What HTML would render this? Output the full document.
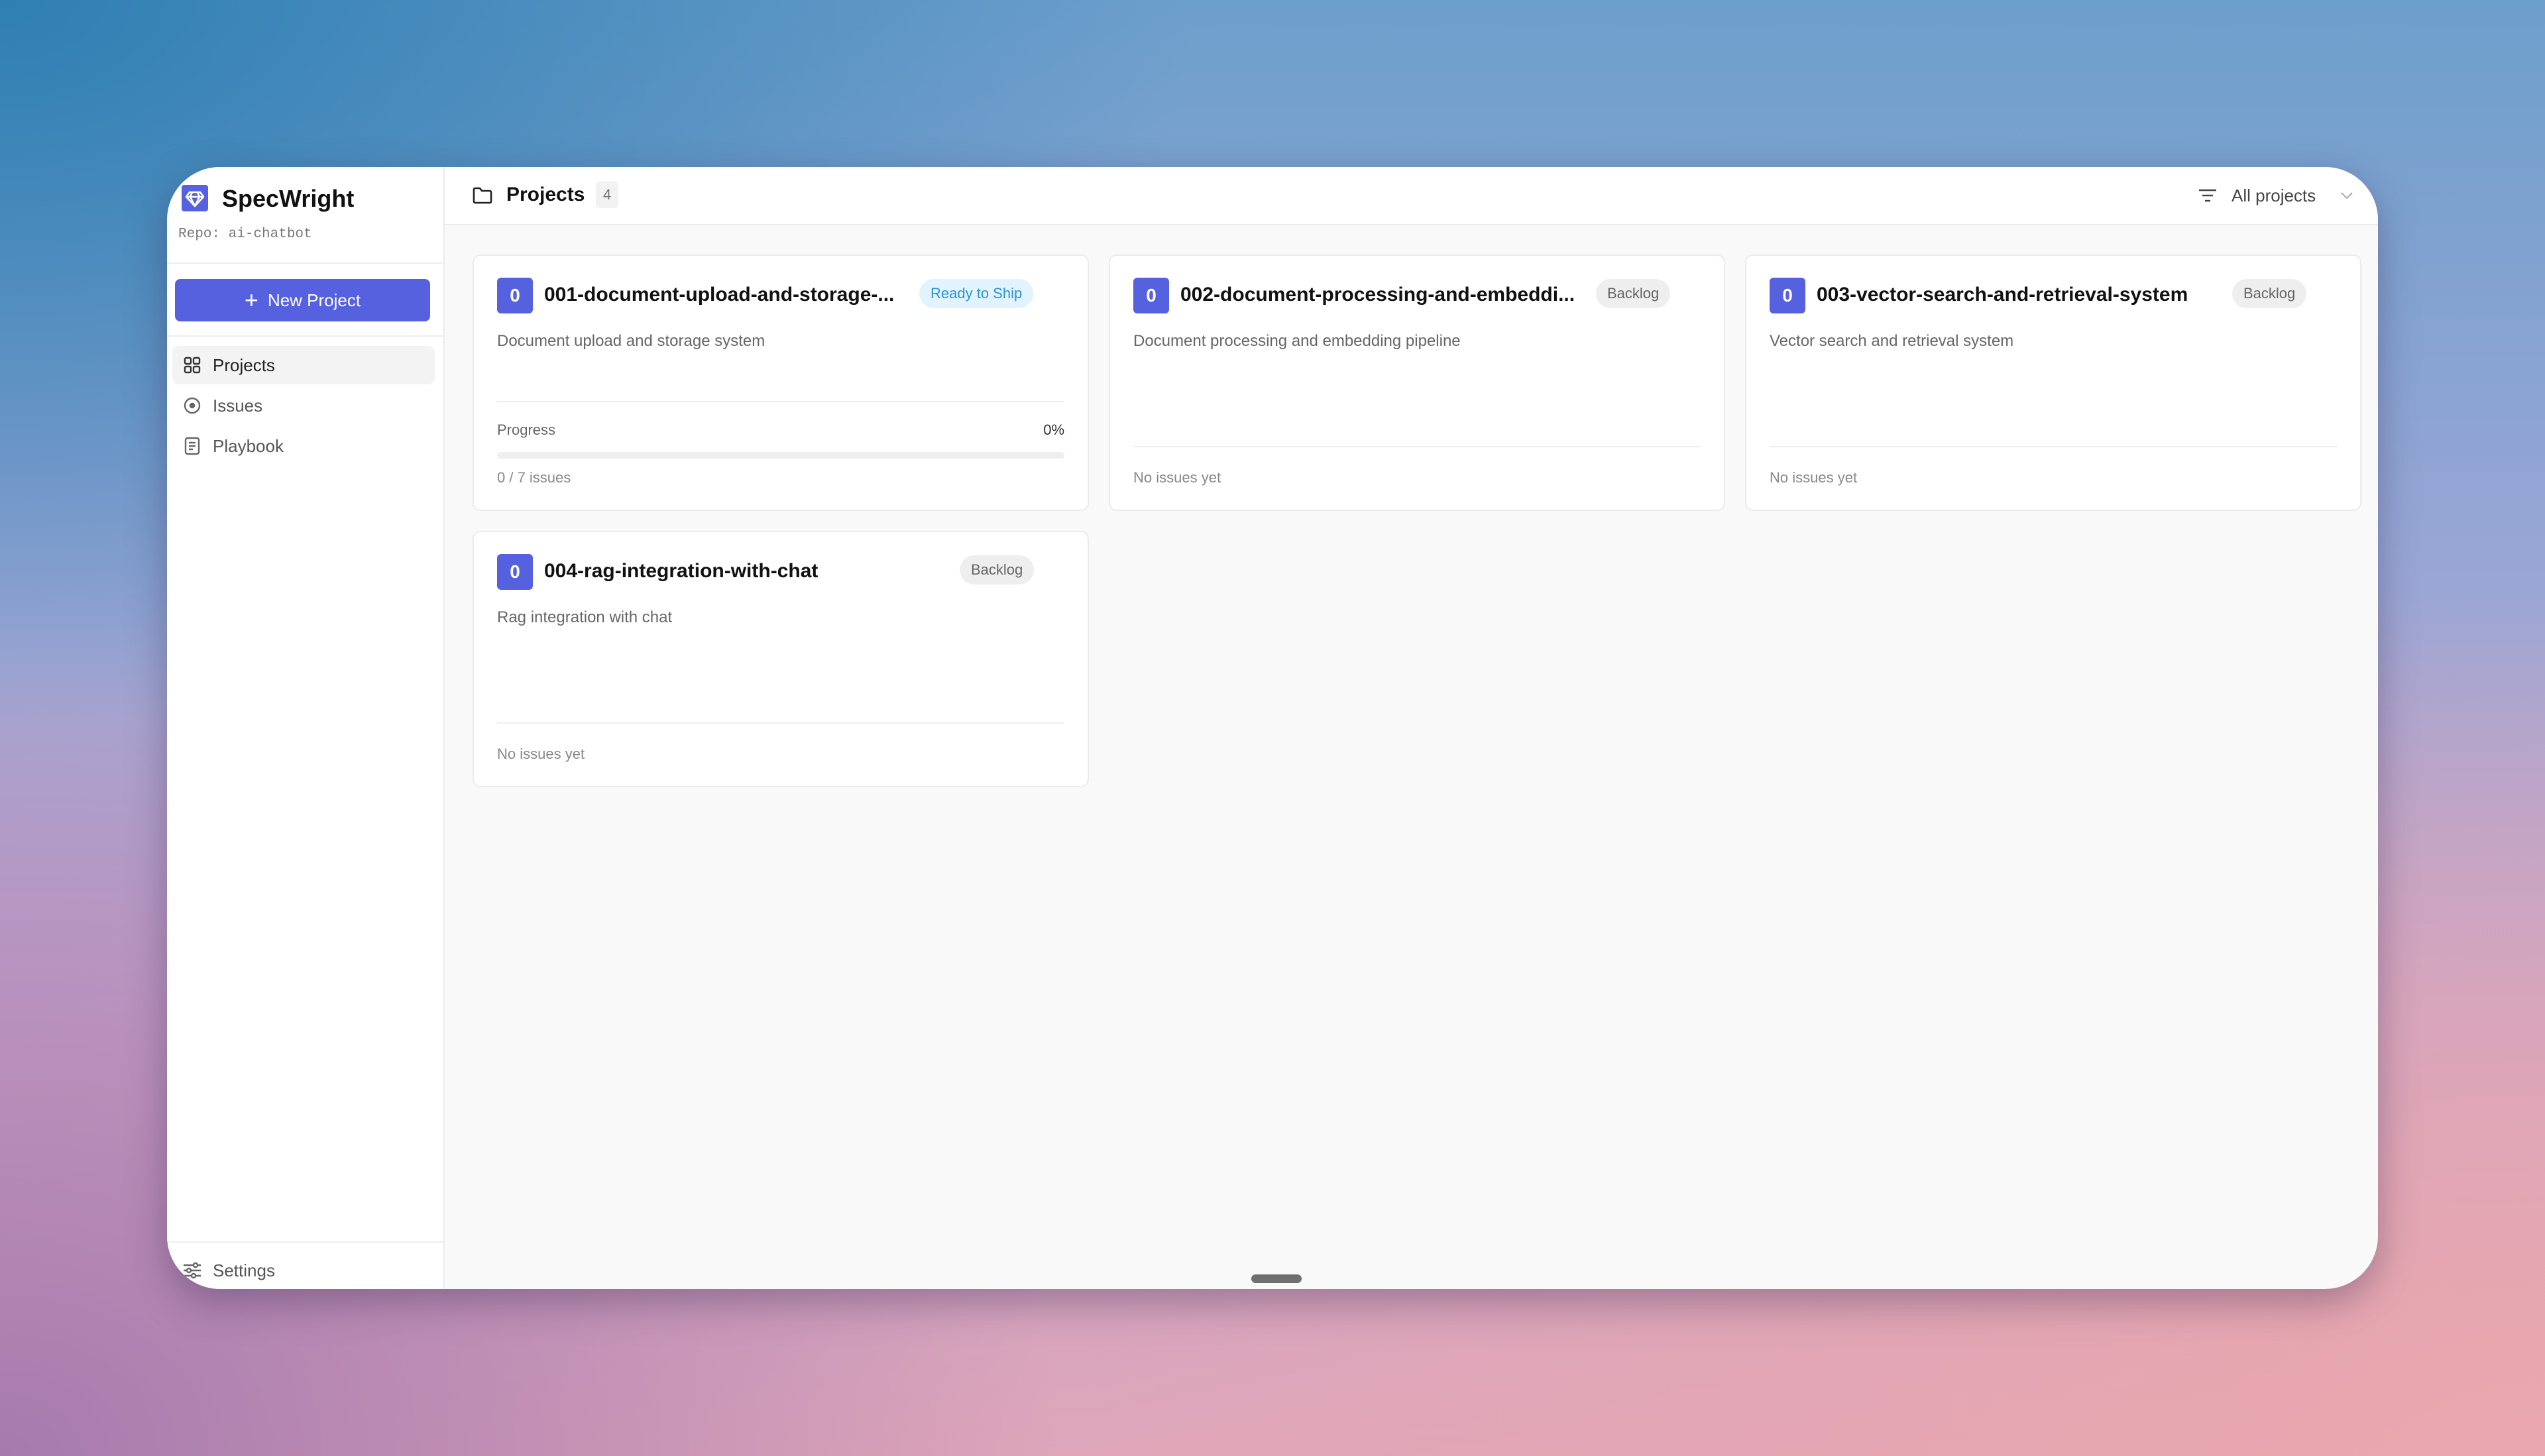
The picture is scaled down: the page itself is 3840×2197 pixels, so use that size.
<!DOCTYPE html>
<html><head><meta charset="utf-8"><style>
*{margin:0;padding:0;box-sizing:border-box}
html,body{width:3840px;height:2197px;overflow:hidden}
body{font-family:"Liberation Sans",sans-serif;position:relative;
background:
radial-gradient(ellipse 1800px 1100px at 0% 0%, #2f7fb3 0%, rgba(47,127,179,0) 100%),
radial-gradient(ellipse 2200px 1300px at 100% 100%, #eaa7ad 0%, rgba(234,167,173,0) 100%),
radial-gradient(ellipse 1600px 1200px at 0% 100%, #a67aae 0%, rgba(166,122,174,0) 100%),
linear-gradient(180deg,#6d9fcc 0%,#9aa6d5 40%,#c8a3c8 70%,#dfa6b9 100%);}
.win{position:absolute;left:252px;top:252px;width:3336px;height:1693px;background:#f9f9f9;border-radius:80px;overflow:hidden;box-shadow:0 20px 60px rgba(40,30,70,.35)}
.side{position:absolute;left:0;top:0;width:419px;height:100%;background:#fff;border-right:2px solid #ececec}
.hdr{position:absolute;left:419px;top:0;right:0;height:88px;background:#fff;border-bottom:2px solid #ececec}
.a{position:absolute;white-space:nowrap}
.card{position:absolute;width:930px;height:387px;background:#fff;border:2px solid #ebebeb;border-radius:12px}
.num{position:absolute;left:35px;top:33px;width:54px;height:54px;background:#5661df;border-radius:6px;color:#fff;font-size:28px;font-weight:600;text-align:center;line-height:54px}
.title{position:absolute;left:106px;top:42px;font-size:30px;font-weight:600;color:#111;white-space:nowrap}
.pill{position:absolute;top:35px;height:44px;border-radius:22px;font-size:22px;line-height:44px;padding:0 17px;background:#eeeeee;color:#666}
.desc{position:absolute;left:35px;top:115px;font-size:24px;color:#666;white-space:nowrap}
.hr{position:absolute;left:35px;right:35px;height:2px;background:#eeeeee}
.small{position:absolute;left:35px;font-size:22px;color:#888;white-space:nowrap}
</style></head><body>
<div class="win">
 <div class="side">
  <svg class="a" style="left:22px;top:27px" width="40" height="40" viewBox="0 0 40 40"><rect width="40" height="40" rx="4" fill="#5661df"/><path d="M12 11h16l5 7-13 14L7 18z M7 18h26 M16 11l-3 7 7 14 7-14-3-7" fill="none" stroke="#fff" stroke-width="2.6" stroke-linejoin="round"/></svg>
  <div class="a" style="left:83px;top:27px;font-size:36px;font-weight:600;color:#111">SpecWright</div>
  <div class="a" style="left:17px;top:341px;top:90px;font-family:'Liberation Mono',monospace;font-size:21px;color:#777">Repo: ai-chatbot</div>
  <div class="a" style="left:0;top:144px;width:417px;height:2px;background:#eee"></div>
  <div class="a" style="left:12px;top:169px;width:385px;height:64px;background:#5661df;border-radius:8px;color:#fff;font-size:26px;text-align:center;line-height:64px"><span style="font-size:36px;font-weight:300;vertical-align:-3px;margin-right:14px">+</span>New Project</div>
  <div class="a" style="left:0;top:254px;width:417px;height:2px;background:#eee"></div>
  <div class="a" style="left:8px;top:270px;width:396px;height:58px;background:#f3f3f3;border-radius:10px"></div>
  <svg class="a" style="left:25px;top:286px" width="26" height="26" viewBox="0 0 26 26" fill="none" stroke="#333" stroke-width="2.4"><rect x="2" y="2" width="9" height="9" rx="2"/><rect x="15" y="2" width="9" height="9" rx="2"/><rect x="2" y="15" width="9" height="9" rx="2"/><rect x="15" y="15" width="9" height="9" rx="2"/></svg>
  <div class="a" style="left:69px;top:284px;font-size:26px;color:#222">Projects</div>
  <svg class="a" style="left:25px;top:347px" width="26" height="26" viewBox="0 0 26 26" fill="none" stroke="#666" stroke-width="2.4"><circle cx="13" cy="13" r="11"/><circle cx="13" cy="13" r="3" fill="#666"/></svg>
  <div class="a" style="left:69px;top:345px;font-size:26px;color:#555">Issues</div>
  <svg class="a" style="left:26px;top:407px" width="24" height="28" viewBox="0 0 24 28" fill="none" stroke="#666" stroke-width="2.4"><rect x="2" y="2" width="20" height="24" rx="3"/><path d="M7 9h10M7 14h10M7 19h6"/></svg>
  <div class="a" style="left:69px;top:406px;font-size:26px;color:#555">Playbook</div>
  <div class="a" style="left:0;top:1621px;width:417px;height:2px;background:#eee"></div>
  <svg class="a" style="left:24px;top:1652px" width="28" height="26" viewBox="0 0 28 26" fill="none" stroke="#666" stroke-width="2.4"><path d="M1 5h26M1 13h26M1 21h26"/><circle cx="19" cy="5" r="3" fill="#fff"/><circle cx="9" cy="13" r="3" fill="#fff"/><circle cx="16" cy="21" r="3" fill="#fff"/></svg>
  <div class="a" style="left:69px;top:1650px;font-size:26px;color:#555">Settings</div>
 </div>
 <div class="hdr">
  <svg class="a" style="left:42px;top:30px" width="30" height="26" viewBox="0 0 30 26" fill="none" stroke="#222" stroke-width="2.6" stroke-linejoin="round"><path d="M2 4a2 2 0 0 1 2-2h7l3 4h12a2 2 0 0 1 2 2v14a2 2 0 0 1-2 2H4a2 2 0 0 1-2-2z"/></svg>
  <div class="a" style="left:93px;top:25px;font-size:30px;font-weight:600;color:#111">Projects</div>
  <div class="a" style="left:228px;top:22px;width:34px;height:40px;background:#f2f2f2;border-radius:6px;font-size:22px;color:#777;text-align:center;line-height:40px">4</div>
  <svg class="a" style="left:2645px;top:32px" width="30" height="22" viewBox="0 0 30 22" fill="none" stroke="#444" stroke-width="2.6"><path d="M2 3h26M7 11h16M11 19h8"/></svg>
  <div class="a" style="left:2696px;top:28px;font-size:26px;color:#444">All projects</div>
  <svg class="a" style="left:2860px;top:37px" width="20" height="12" viewBox="0 0 20 12" fill="none" stroke="#aaa" stroke-width="2"><path d="M2 2l8 8 8-8"/></svg>
 </div>
 <div class="card" style="left:461px;top:132px">
  <div class="num">0</div><div class="title">001-document-upload-and-storage-...</div>
  <div class="pill" style="left:672px;background:#e1f3fd;color:#2a93d8">Ready to Ship</div>
  <div class="desc">Document upload and storage system</div>
  <div class="hr" style="top:219px"></div>
  <div class="small" style="top:250px;color:#666">Progress</div>
  <div class="a" style="right:35px;top:250px;font-size:22px;color:#333">0%</div>
  <div class="hr" style="top:296px;height:10px;border-radius:5px;background:#efefef"></div>
  <div class="small" style="top:322px">0 / 7 issues</div>
 </div>
 <div class="card" style="left:1421px;top:132px">
  <div class="num">0</div><div class="title">002-document-processing-and-embeddi...</div>
  <div class="pill" style="left:733px">Backlog</div>
  <div class="desc">Document processing and embedding pipeline</div>
  <div class="hr" style="top:287px"></div>
  <div class="small" style="top:322px">No issues yet</div>
 </div>
 <div class="card" style="left:2381px;top:132px">
  <div class="num">0</div><div class="title">003-vector-search-and-retrieval-system</div>
  <div class="pill" style="left:733px">Backlog</div>
  <div class="desc">Vector search and retrieval system</div>
  <div class="hr" style="top:287px"></div>
  <div class="small" style="top:322px">No issues yet</div>
 </div>
 <div class="card" style="left:461px;top:549px">
  <div class="num">0</div><div class="title">004-rag-integration-with-chat</div>
  <div class="pill" style="left:733px">Backlog</div>
  <div class="desc">Rag integration with chat</div>
  <div class="hr" style="top:287px"></div>
  <div class="small" style="top:322px">No issues yet</div>
 </div>
 <div class="a" style="left:1636px;top:1671px;width:76px;height:13px;border-radius:7px;background:#6f6f6f"></div>
</div>
</body></html>
